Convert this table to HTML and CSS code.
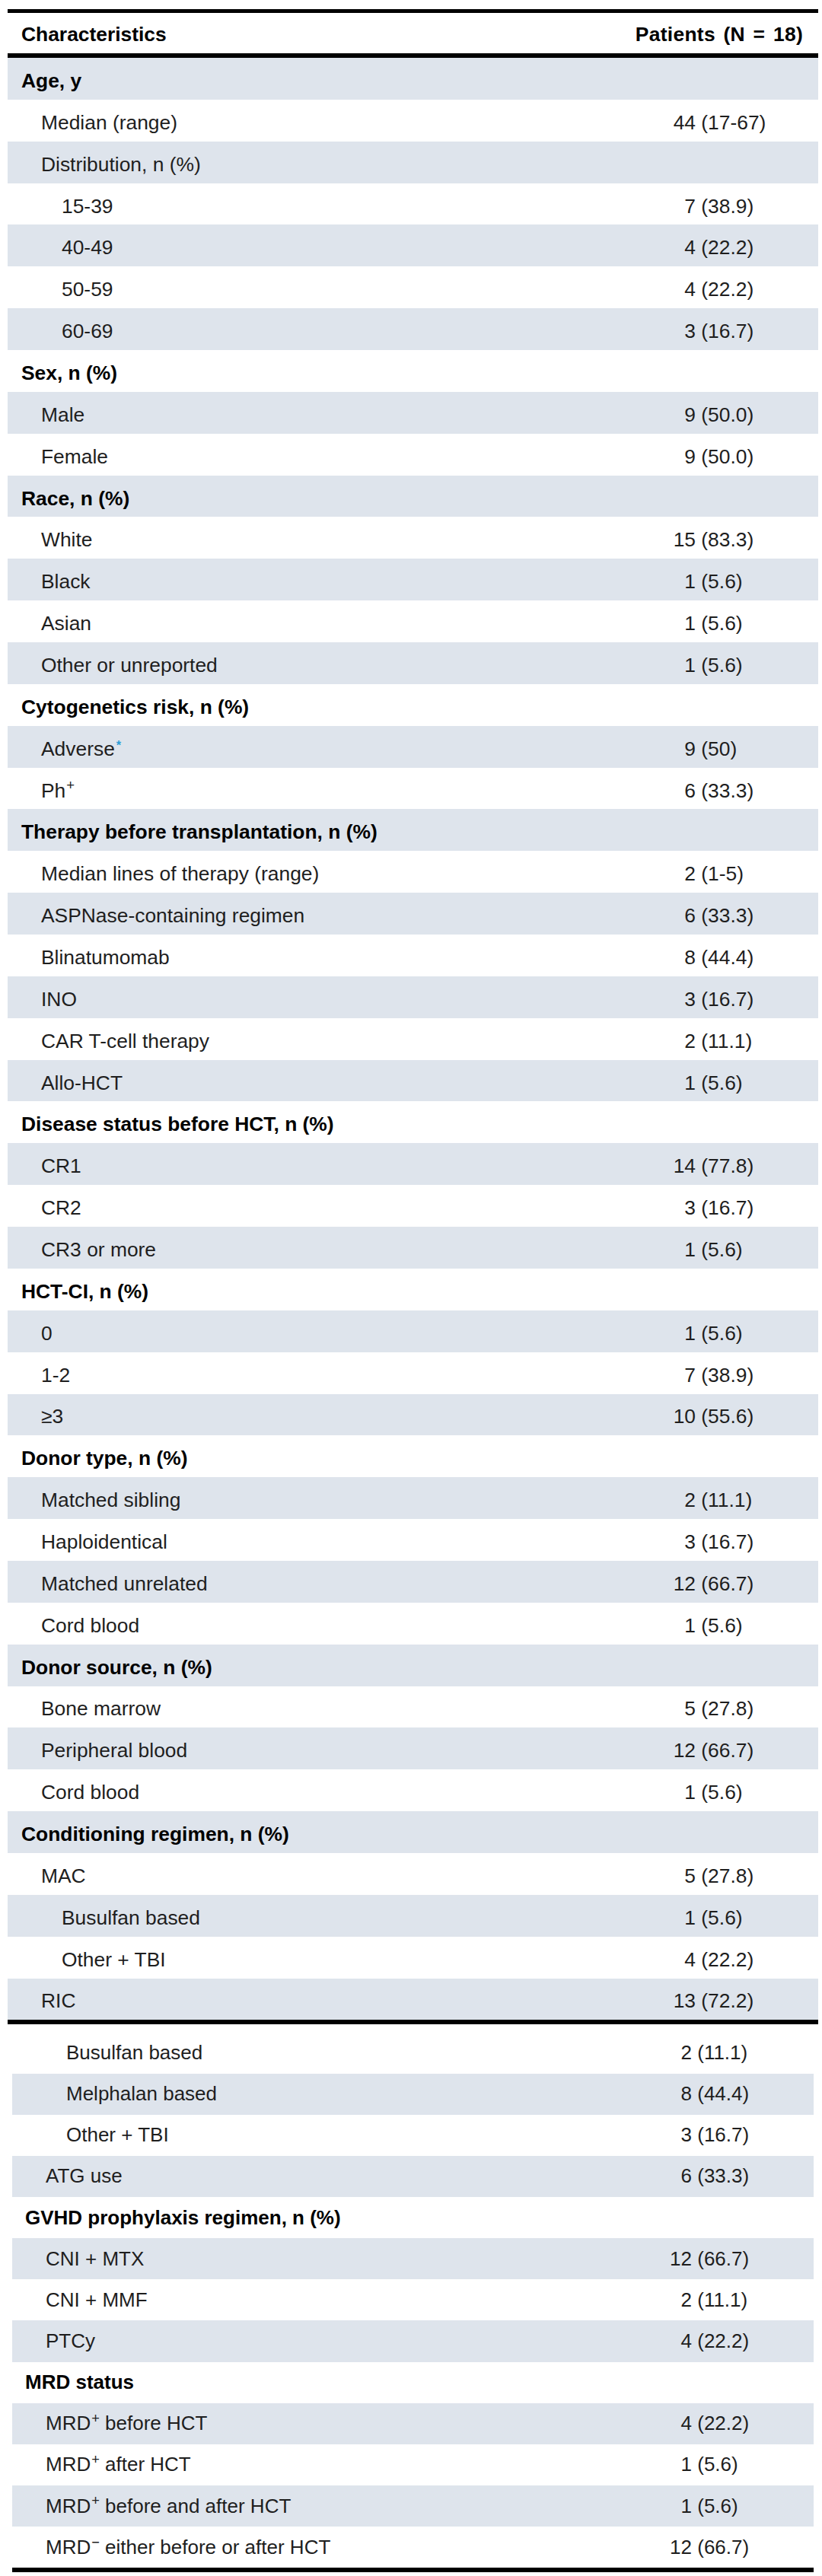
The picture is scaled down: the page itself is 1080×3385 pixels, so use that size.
FILE: index.html
```html
<!DOCTYPE html>
<html lang="en">
<head>
<meta charset="utf-8">
<title>Patient characteristics</title>
<link rel="stylesheet" href="styles.css">
</head>
<body>
<div class="page p1">
  <div class="thead"><div class="label">Characteristics</div><div class="hd">Patients (N = 18)</div></div>
  <div class="row s h"><div class="label">Age, y</div></div>
  <div class="row l1"><div class="label">Median (range)</div><div class="val"><span class="n">44</span><span class="p">(17-67)</span></div></div>
  <div class="row s l1"><div class="label">Distribution, n (%)</div></div>
  <div class="row l2"><div class="label">15-39</div><div class="val"><span class="n">7</span><span class="p">(38.9)</span></div></div>
  <div class="row s l2"><div class="label">40-49</div><div class="val"><span class="n">4</span><span class="p">(22.2)</span></div></div>
  <div class="row l2"><div class="label">50-59</div><div class="val"><span class="n">4</span><span class="p">(22.2)</span></div></div>
  <div class="row s l2"><div class="label">60-69</div><div class="val"><span class="n">3</span><span class="p">(16.7)</span></div></div>
  <div class="row h"><div class="label">Sex, n (%)</div></div>
  <div class="row s l1"><div class="label">Male</div><div class="val"><span class="n">9</span><span class="p">(50.0)</span></div></div>
  <div class="row l1"><div class="label">Female</div><div class="val"><span class="n">9</span><span class="p">(50.0)</span></div></div>
  <div class="row s h"><div class="label">Race, n (%)</div></div>
  <div class="row l1"><div class="label">White</div><div class="val"><span class="n">15</span><span class="p">(83.3)</span></div></div>
  <div class="row s l1"><div class="label">Black</div><div class="val"><span class="n">1</span><span class="p">(5.6)</span></div></div>
  <div class="row l1"><div class="label">Asian</div><div class="val"><span class="n">1</span><span class="p">(5.6)</span></div></div>
  <div class="row s l1"><div class="label">Other or unreported</div><div class="val"><span class="n">1</span><span class="p">(5.6)</span></div></div>
  <div class="row h"><div class="label">Cytogenetics risk, n (%)</div></div>
  <div class="row s l1"><div class="label">Adverse<sup class="fn">*</sup></div><div class="val"><span class="n">9</span><span class="p">(50)</span></div></div>
  <div class="row l1"><div class="label">Ph<sup>+</sup></div><div class="val"><span class="n">6</span><span class="p">(33.3)</span></div></div>
  <div class="row s h"><div class="label">Therapy before transplantation, n (%)</div></div>
  <div class="row l1"><div class="label">Median lines of therapy (range)</div><div class="val"><span class="n">2</span><span class="p">(1-5)</span></div></div>
  <div class="row s l1"><div class="label">ASPNase-containing regimen</div><div class="val"><span class="n">6</span><span class="p">(33.3)</span></div></div>
  <div class="row l1"><div class="label">Blinatumomab</div><div class="val"><span class="n">8</span><span class="p">(44.4)</span></div></div>
  <div class="row s l1"><div class="label">INO</div><div class="val"><span class="n">3</span><span class="p">(16.7)</span></div></div>
  <div class="row l1"><div class="label">CAR T-cell therapy</div><div class="val"><span class="n">2</span><span class="p">(11.1)</span></div></div>
  <div class="row s l1"><div class="label">Allo-HCT</div><div class="val"><span class="n">1</span><span class="p">(5.6)</span></div></div>
  <div class="row h"><div class="label">Disease status before HCT, n (%)</div></div>
  <div class="row s l1"><div class="label">CR1</div><div class="val"><span class="n">14</span><span class="p">(77.8)</span></div></div>
  <div class="row l1"><div class="label">CR2</div><div class="val"><span class="n">3</span><span class="p">(16.7)</span></div></div>
  <div class="row s l1"><div class="label">CR3 or more</div><div class="val"><span class="n">1</span><span class="p">(5.6)</span></div></div>
  <div class="row h"><div class="label">HCT-CI, n (%)</div></div>
  <div class="row s l1"><div class="label">0</div><div class="val"><span class="n">1</span><span class="p">(5.6)</span></div></div>
  <div class="row l1"><div class="label">1-2</div><div class="val"><span class="n">7</span><span class="p">(38.9)</span></div></div>
  <div class="row s l1"><div class="label">&ge;3</div><div class="val"><span class="n">10</span><span class="p">(55.6)</span></div></div>
  <div class="row h"><div class="label">Donor type, n (%)</div></div>
  <div class="row s l1"><div class="label">Matched sibling</div><div class="val"><span class="n">2</span><span class="p">(11.1)</span></div></div>
  <div class="row l1"><div class="label">Haploidentical</div><div class="val"><span class="n">3</span><span class="p">(16.7)</span></div></div>
  <div class="row s l1"><div class="label">Matched unrelated</div><div class="val"><span class="n">12</span><span class="p">(66.7)</span></div></div>
  <div class="row l1"><div class="label">Cord blood</div><div class="val"><span class="n">1</span><span class="p">(5.6)</span></div></div>
  <div class="row s h"><div class="label">Donor source, n (%)</div></div>
  <div class="row l1"><div class="label">Bone marrow</div><div class="val"><span class="n">5</span><span class="p">(27.8)</span></div></div>
  <div class="row s l1"><div class="label">Peripheral blood</div><div class="val"><span class="n">12</span><span class="p">(66.7)</span></div></div>
  <div class="row l1"><div class="label">Cord blood</div><div class="val"><span class="n">1</span><span class="p">(5.6)</span></div></div>
  <div class="row s h"><div class="label">Conditioning regimen, n (%)</div></div>
  <div class="row l1"><div class="label">MAC</div><div class="val"><span class="n">5</span><span class="p">(27.8)</span></div></div>
  <div class="row s l2"><div class="label">Busulfan based</div><div class="val"><span class="n">1</span><span class="p">(5.6)</span></div></div>
  <div class="row l2"><div class="label">Other + TBI</div><div class="val"><span class="n">4</span><span class="p">(22.2)</span></div></div>
  <div class="row s l1"><div class="label">RIC</div><div class="val"><span class="n">13</span><span class="p">(72.2)</span></div></div>
</div>
<div class="page p2">
  <div class="row l2"><div class="label">Busulfan based</div><div class="val"><span class="n">2</span><span class="p">(11.1)</span></div></div>
  <div class="row s l2"><div class="label">Melphalan based</div><div class="val"><span class="n">8</span><span class="p">(44.4)</span></div></div>
  <div class="row l2"><div class="label">Other + TBI</div><div class="val"><span class="n">3</span><span class="p">(16.7)</span></div></div>
  <div class="row s l1"><div class="label">ATG use</div><div class="val"><span class="n">6</span><span class="p">(33.3)</span></div></div>
  <div class="row h"><div class="label">GVHD prophylaxis regimen, n (%)</div></div>
  <div class="row s l1"><div class="label">CNI + MTX</div><div class="val"><span class="n">12</span><span class="p">(66.7)</span></div></div>
  <div class="row l1"><div class="label">CNI + MMF</div><div class="val"><span class="n">2</span><span class="p">(11.1)</span></div></div>
  <div class="row s l1"><div class="label">PTCy</div><div class="val"><span class="n">4</span><span class="p">(22.2)</span></div></div>
  <div class="row h"><div class="label">MRD status</div></div>
  <div class="row s l1"><div class="label">MRD<sup>+</sup> before HCT</div><div class="val"><span class="n">4</span><span class="p">(22.2)</span></div></div>
  <div class="row l1"><div class="label">MRD<sup>+</sup> after HCT</div><div class="val"><span class="n">1</span><span class="p">(5.6)</span></div></div>
  <div class="row s l1"><div class="label">MRD<sup>+</sup> before and after HCT</div><div class="val"><span class="n">1</span><span class="p">(5.6)</span></div></div>
  <div class="row l1"><div class="label">MRD<sup>&minus;</sup> either before or after HCT</div><div class="val"><span class="n">12</span><span class="p">(66.7)</span></div></div>
</div>
</body>
</html>
```

FILE: styles.css
```css
html, body {
  margin: 0;
  padding: 0;
  background: #ffffff;
}

body {
  font-family: "Liberation Sans", Arial, Helvetica, sans-serif;
  color: #1e1e1e;
}

.page {
  display: flex;
  flex-direction: column;
}

.p1 {
  margin: 12px 0 0 10px;
  width: 1065px;
  font-size: 26.4px;
  border-top: 5px solid #000;
  border-bottom: 6px solid #000;
}

.p2 {
  margin: 0 0 0 16px;
  width: 1053px;
  font-size: 26px;
  padding-top: 10px;
  border-bottom: 6px solid #000;
}

.thead {
  height: 59px;
  box-sizing: border-box;
  padding: 3px 20px 0 18px;
  display: flex;
  align-items: center;
  justify-content: space-between;
  font-weight: bold;
  color: #000;
  border-bottom: 6px solid #000;
}

.thead .hd {
  word-spacing: 3px;
  letter-spacing: 0.3px;
}

.row {
  display: flex;
  align-items: center;
  box-sizing: border-box;
}

.p1 .row {
  height: 54.87px;
  padding-top: 6px;
}

.p2 .row {
  height: 54.15px;
}

.row.s {
  background: #dee4ec;
}

.label {
  flex: 1;
  white-space: nowrap;
}

.row.h .label {
  font-weight: bold;
  color: #000;
  padding-left: 18px;
}

.p2 .row.h .label {
  padding-left: 17px;
}

.row.l1 .label {
  padding-left: 44px;
}

.row.l2 .label {
  padding-left: 71px;
}

.val {
  width: 225px;
  display: flex;
  white-space: nowrap;
}

.val .n {
  width: 64px;
  text-align: right;
}

.p2 .val .n {
  width: 65px;
}

.val .p {
  margin-left: 0.278em;
}

sup {
  font-size: 0.7em;
  line-height: 0;
  vertical-align: 0.5em;
  margin-left: 1px;
}

sup.fn {
  color: #2f9ed6;
  font-weight: bold;
  font-size: 0.62em;
  margin-left: 2px;
}
```
